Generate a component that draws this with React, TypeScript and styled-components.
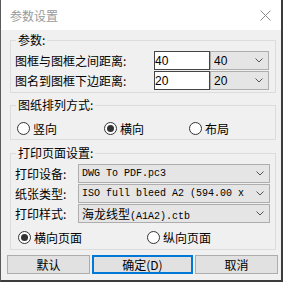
import React from "react";
import styled, { createGlobalStyle, css } from "styled-components";

const Global = createGlobalStyle`
  html, body { margin: 0; padding: 0; background: #ffffff; }
  body {
    font-family: "Noto Sans CJK SC", "Liberation Sans", sans-serif;
    font-size: 12px;
    color: #000;
  }
  * { box-sizing: border-box; }
`;

const Window = styled.div`
  width: 283px;
  height: 282px;
  display: flex;
  flex-direction: column;
  background: #f0f0f0;
  border-left: 1px solid #5a5a5a;
  border-right: 2px solid #3c3c3c;
  border-bottom: 2px solid #3c3c3c;
`;

const TitleBar = styled.div`
  height: 30px;
  flex: none;
  background: #ffffff;
  display: flex;
  align-items: center;
  justify-content: space-between;
  padding: 0 10px 0 9px;
  color: #9a9a9a;
  font-size: 12px;
`;

const Group = styled.fieldset<{ $mt: number; $pt: number; $pb: number; $pr?: number }>`
  margin: ${(p) => p.$mt}px 5px 0 9px;
  padding: ${(p) => p.$pt}px ${(p) => p.$pr ?? 6}px ${(p) => p.$pb}px 4px;
  border: 1px solid #dcdcdc;
  min-width: 0;
  display: flex;
  flex-direction: column;
`;

const Legend = styled.legend`
  margin-left: 1px;
  padding: 0 2px;
  line-height: 14px;
  height: 14px;
  font-size: 12px;
`;

const Rows = styled.div`
  display: flex;
  flex-direction: column;
  gap: 1px;
`;

const Row = styled.div`
  display: flex;
  align-items: center;
  height: 19px;
`;

const Label = styled.span<{ $w?: number }>`
  ${(p) => (p.$w ? css`width: ${p.$w}px; flex: none;` : css`flex: 1;`)}
  white-space: nowrap;
  line-height: 19px;
`;

const TextInput = styled.div`
  width: 56px;
  height: 19px;
  flex: none;
  background: #ffffff;
  border: 1px solid #444;
  padding-left: 0px;
  display: flex;
  align-items: center;
  font-family: "Liberation Sans", sans-serif;
  font-size: 12px;
`;

const Select = styled.div<{ $w: number; $mono?: boolean }>`
  width: ${(p) => p.$w}px;
  height: 19px;
  flex: none;
  background: #e5e5e5;
  border: 1px solid #adadad;
  display: flex;
  align-items: center;
  padding: 0 5px 0 3px;
  white-space: nowrap;
  overflow: hidden;
  font-family: ${(p) =>
    p.$mono ? `"Liberation Mono", monospace` : `"Liberation Sans", sans-serif`};
  font-size: ${(p) => (p.$mono ? 10 : 12)}px;
`;

const SelectText = styled.span`
  flex: 1;
  overflow: hidden;
`;

const Cjk = styled.span`
  font-family: "Noto Sans CJK SC", sans-serif;
  font-size: 12px;
`;

const Chevron = () => (
  <svg width="8" height="5" viewBox="0 0 8 5" style={{ flex: "none", marginLeft: 4 }}>
    <polyline points="0.5,0.5 4,4 7.5,0.5" fill="none" stroke="#555" strokeWidth="1" />
  </svg>
);

const RadioRow = styled.div<{ $cols: string; $pl: number; $mt?: number }>`
  display: grid;
  grid-template-columns: ${(p) => p.$cols};
  align-items: center;
  height: 16px;
  padding-left: ${(p) => p.$pl}px;
  margin-top: ${(p) => p.$mt ?? 0}px;
`;

const RadioLabel = styled.label`
  display: flex;
  align-items: center;
  gap: 3px;
  white-space: nowrap;
`;

const Circle = styled.span<{ $checked?: boolean }>`
  width: 13px;
  height: 13px;
  flex: none;
  border-radius: 50%;
  border: 1px solid #333;
  background: #fff;
  display: flex;
  align-items: center;
  justify-content: center;
  ${(p) =>
    p.$checked &&
    css`
      &::after {
        content: "";
        width: 7px;
        height: 7px;
        border-radius: 50%;
        background: #333;
      }
    `}
`;

const Radio = ({ checked, children }: { checked?: boolean; children: React.ReactNode }) => (
  <RadioLabel>
    <Circle $checked={checked} />
    <span>{children}</span>
  </RadioLabel>
);

const ButtonBar = styled.div`
  display: flex;
  gap: 2px;
  margin-top: 5px;
  padding-left: 6px;
`;

const Button = styled.button<{ $w: number; $primary?: boolean }>`
  width: ${(p) => p.$w}px;
  height: 19px;
  padding: 0;
  margin: 0;
  background: #e1e1e1;
  border: ${(p) => (p.$primary ? "2px solid #0078d7" : "1px solid #adadad")};
  font-family: "Noto Sans CJK SC", sans-serif;
  font-size: 12px;
  color: #000;
  display: flex;
  align-items: center;
  justify-content: center;
  line-height: 1;
`;

export default function App() {
  return (
    <>
      <Global />
      <Window>
        <TitleBar>
          <span>参数设置</span>
          <svg width="11" height="11" viewBox="0 0 11 11">
            <path d="M0.5 0.5 L10.5 10.5 M10.5 0.5 L0.5 10.5" stroke="#8a8a8a" strokeWidth="1" />
          </svg>
        </TitleBar>

        <Group $mt={3} $pt={4} $pb={2}>
          <Legend>参数:</Legend>
          <Rows>
            <Row>
              <Label>图框与图框之间距离:</Label>
              <TextInput>40</TextInput>
              <Select $w={59}>
                <SelectText>40</SelectText>
                <Chevron />
              </Select>
            </Row>
            <Row>
              <Label>图名到图框下边距离:</Label>
              <TextInput>20</TextInput>
              <Select $w={59}>
                <SelectText>20</SelectText>
                <Chevron />
              </Select>
            </Row>
          </Rows>
        </Group>

        <Group $mt={5} $pt={8} $pb={3}>
          <Legend>图纸排列方式:</Legend>
          <RadioRow $cols="87px 85px auto" $pl={2}>
            <Radio>竖向</Radio>
            <Radio checked>横向</Radio>
            <Radio>布局</Radio>
          </RadioRow>
        </Group>

        <Group $mt={6} $pt={4} $pb={4} $pr={5}>
          <Legend>打印页面设置:</Legend>
          <Rows>
            <Row>
              <Label $w={63}>打印设备:</Label>
              <Select $w={192} $mono>
                <SelectText>DWG To PDF.pc3</SelectText>
                <Chevron />
              </Select>
            </Row>
            <Row>
              <Label $w={63}>纸张类型:</Label>
              <Select $w={192} $mono>
                <SelectText>ISO full bleed A2 (594.00 x</SelectText>
                <Chevron />
              </Select>
            </Row>
            <Row>
              <Label $w={63}>打印样式:</Label>
              <Select $w={192} $mono>
                <SelectText>
                  <Cjk>海龙线型</Cjk>(A1A2).ctb
                </SelectText>
                <Chevron />
              </Select>
            </Row>
          </Rows>
          <RadioRow $cols="129px auto" $pl={3} $mt={6}>
            <Radio checked>横向页面</Radio>
            <Radio>纵向页面</Radio>
          </RadioRow>
        </Group>

        <ButtonBar>
          <Button $w={83}>默认</Button>
          <Button $w={101} $primary>确定(D)</Button>
          <Button $w={83}>取消</Button>
        </ButtonBar>
      </Window>
    </>
  );
}
